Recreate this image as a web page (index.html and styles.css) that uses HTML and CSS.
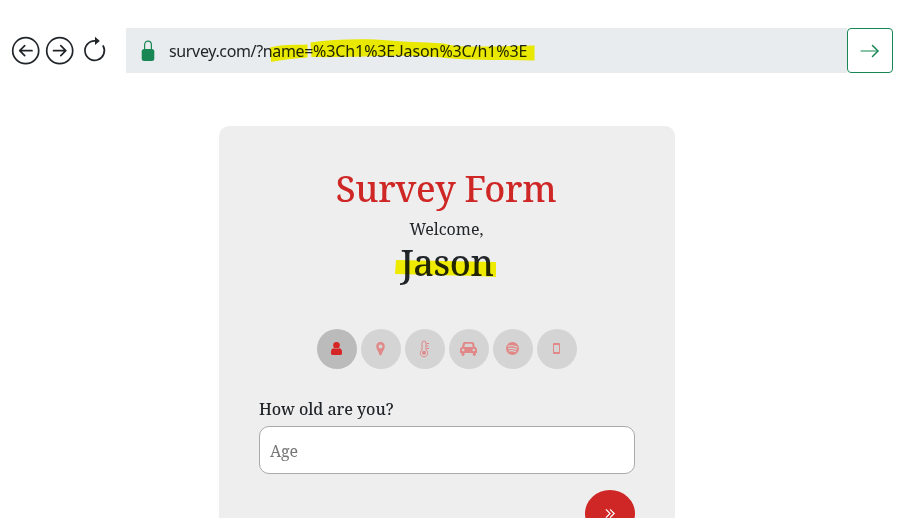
FILE: index.html
```html
<!DOCTYPE html>
<html lang="en">
<head>
<meta charset="utf-8">
<title>Survey Form</title>
<link rel="stylesheet" href="styles.css">
</head>
<body>
<header class="browser">
  <nav class="controls">
    <svg class="control" viewBox="0 0 28 28"><circle cx="13.700" cy="13.700" r="13"/><path d="M20 13.700H8M12.700 8.700l-5 5 5 5"/></svg>
    <svg class="control" viewBox="0 0 28 28"><circle cx="13.700" cy="13.700" r="13"/><path d="M7.500 13.700h12M14.800 8.700l5 5-5 5"/></svg>
    <svg class="control" viewBox="0 0 28 28"><path d="M23.200 9A9.700 9.700 0 1 1 14.600 3.900H16"/><path class="solid" d="M15 -.2v8.200l4.800-3.900z"/></svg>
  </nav>
  <div class="address">
    <svg class="lock" viewBox="0 0 14 22"><path class="shackle" d="M3.600 10V5C3.600 2.600 4.900 1.200 7 1.200s3.400 1.400 3.400 3.800v5"/><rect x=".7" y="9" width="12.600" height="12" rx="2.500"/></svg>
    <span class="url"><span class="host">survey.com/?name=</span>%3Ch1%3E<span class="cap">J</span>ason%3C/h1%3E</span>
    <svg class="marker url-marker" viewBox="0 0 270 26"><path d="M0 8.500C12 5 25 6 37.500 5.500V18.500C25 19 12 21 1 23Z"/><path d="M40.500 3.500C65 0 95-.5 120 1.500 138 3 150 3 174 4.500 188 9.500 225 7 264.500 6.500V21.500C230 20.500 200 22 166 18 130 15 80 19 41.500 18Z"/></svg>
  </div>
  <button class="go" aria-label="Go"><svg viewBox="0 0 20 14"><path class="stem" d="M1 7h17"/><path d="M12.500 1.500 18 7l-5.500 5.500"/></svg></button>
</header>
<main class="card">
  <h1 class="title"><span>Survey Form</span></h1>
  <p class="welcome">Welcome,</p>
  <h1 class="name"><span>Jason</span>
    <svg class="marker name-marker" viewBox="0 0 102 18"><path d="M1 1C30 2 65 2 101 3V18C65 16 32 16 0 15Z"/></svg>
  </h1>
  <div class="steps">
    <span class="step active"><svg viewBox="0 0 20 20"><circle cx="9.500" cy="6.300" r="3.300"/><path d="M4 13Q4 9.200 7 9.200Q9.500 10.800 12 9.200Q15 9.200 15 13V14.500Q15 16 13 16H6Q4 16 4 14.500Z"/></svg></span>
    <span class="step"><svg viewBox="0 0 20 20"><path fill-rule="evenodd" d="M9.500 3A4.300 4.300 0 0 0 5.200 7.500C5.300 10.200 7.800 12.500 8.300 15.500Q9.500 17 10.700 15.500C11.200 12.500 13.700 10.200 13.800 7.500A4.300 4.300 0 0 0 9.500 3ZM9.500 5.400a2 2 0 1 1 0 4 2 2 0 0 1 0-4Z"/></svg></span>
    <span class="step"><svg viewBox="0 0 20 20"><path class="line" d="M7 11V4a2 2 0 0 1 4 0v7a3.700 3.700 0 1 1-4 0ZM11.500 4.500h2.500M11.500 7h2M11.500 9.500h2.500"/><circle cx="9" cy="13.700" r="2"/></svg></span>
    <span class="step"><svg viewBox="0 0 20 20"><path fill-rule="evenodd" d="M5.500 3H13.500Q14.700 3 15 4.200L15.900 8Q18 8 18 10.500V14H16.800V15.500Q16.800 16.900 15.300 16.900T13.800 15.500V14H5.500V15.500Q5.500 16.900 4 16.900T2.500 15.500V14H1V10.500Q1 8 3.100 8L4 4.200Q4.300 3 5.500 3ZM6 4.800 5.300 8h8.400L13 4.800ZM4.200 9.700a1.300 1.300 0 1 0 0 2.600 1.300 1.300 0 0 0 0-2.600ZM14.800 9.700a1.300 1.300 0 1 0 0 2.600 1.300 1.300 0 0 0 0-2.600Z"/></svg></span>
    <span class="step"><svg viewBox="0 0 20 20"><circle cx="9.500" cy="9.500" r="6.500"/><path class="cut" d="M5.300 7.200Q10 6 14 8.100M5.700 9.700Q9.800 8.700 13.200 10.400M6 12Q9.500 11.200 12.400 12.600"/></svg></span>
    <span class="step"><svg viewBox="0 0 20 20"><path fill-rule="evenodd" d="M7 4h5q1 0 1 1v9q0 1-1 1H7q-1 0-1-1V5q0-1 1-1ZM7 6v7h5V6Z"/></svg></span>
  </div>
  <label class="label" for="age"><span>How old are you?</span></label>
  <input class="field" id="age" placeholder="Age">
  <button class="next" aria-label="Next"><svg viewBox="0 0 12 12"><path d="M1 1.500 5.500 6 1 10.500M5.500 1.500 10 6l-4.500 4.500"/></svg></button>
</main>
</body>
</html>
```
FILE: styles.css
```css
* { box-sizing: border-box; }
body {
  margin: 0;
  height: 518px;
  overflow: hidden;
  background: #fff;
  color: #212529;
  font: 16px/24px "Noto Serif", "Droid Serif", "DejaVu Serif", serif;
}
svg { display: block; overflow: visible; }
h1, p { margin: 0; }
.browser { display: flex; padding: 28px 7px 0 12px; height: 73px; }
.controls { display: flex; gap: 6px; align-items: center; width: 114px; }
.control {
  width: 28px;
  height: 28px;
  fill: none;
  stroke: #212529;
  stroke-width: 1.7;
  stroke-linecap: round;
  stroke-linejoin: round;
}
.control .solid { fill: #212529; stroke: none; }
.address {
  position: relative;
  flex: 1;
  display: flex;
  align-items: center;
  gap: 14px;
  padding-left: 15px;
  background: #e9ecef;
}
.lock { width: 14px; height: 22px; fill: #198754; }
.shackle { fill: none; stroke: #198754; stroke-width: 1.2; }
.url { font-family: "Noto Sans", sans-serif; white-space: nowrap; letter-spacing: -.11px; }
.host { letter-spacing: -.35px; }
.cap { font-family: "Noto Sans CJK SC", "Noto Sans", sans-serif; line-height: 1; }
.marker { position: absolute; fill: #fffb00; mix-blend-mode: multiply; }
.url-marker { left: 144px; top: 11px; width: 270px; height: 26px; }
.go {
  display: grid;
  place-items: center;
  width: 46px;
  padding: 0;
  border: 1px solid #198754;
  border-radius: 4px;
  background: #fff;
}
.go svg { width: 20px; height: 14px; fill: none; stroke: #198754; stroke-width: 1.5; stroke-linecap: round; stroke-linejoin: round; }
.go .stem { stroke-width: 1.1; }
.card {
  display: flex;
  flex-direction: column;
  width: 456px;
  height: 392px;
  overflow: hidden;
  margin: 53px 0 0 219px;
  padding: 40px 40px 0;
  border-radius: 10px 10px 0 0;
  background: #eee;
}
.card > * { flex-shrink: 0; }
.title, .name { font-size: 36px; line-height: 43px; font-weight: 500; text-align: center; letter-spacing: -.35px; }
.title { color: #cf2626; padding: 1px 2px 0 0; }
.welcome { text-align: center; margin-top: 7px; padding-right: 1px; }
.name { position: relative; align-self: center; }
.name-marker { left: -5px; top: 18px; width: 102px; height: 18px; }
.steps { display: flex; gap: 4px; justify-content: center; margin-top: 45px; }
.step {
  display: grid;
  place-items: center;
  width: 40px;
  height: 40px;
  border-radius: 50%;
  background: #bbb;
  opacity: .5;
}
.step.active { opacity: 1; }
.step svg { width: 20px; height: 20px; fill: #d62323; }
.step .line { fill: none; stroke: #d62323; stroke-width: 1; }
.step .cut { fill: none; stroke: #bbb; stroke-width: 1.2; stroke-linecap: round; }
.label { font-weight: 500; margin-top: 28px; letter-spacing: -.05px; }
.field {
  width: 376px;
  height: 48px;
  margin: 5px 0 16px;
  padding: 2px 10px 0;
  border: 1px solid #aaa;
  border-radius: 10px;
  background: #fff;
  font: inherit;
}
.field::placeholder { color: #757575; opacity: 1; }
.next {
  display: grid;
  place-items: center;
  align-self: flex-end;
  width: 50px;
  height: 47px;
  border: 0;
  border-radius: 50%;
  background: #cf2626;
}
.next svg { width: 11px; height: 11px; fill: none; stroke: #fff; stroke-width: 1.3; }
```
